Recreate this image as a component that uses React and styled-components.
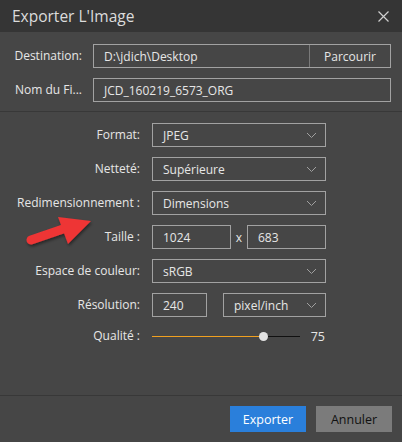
import React from "react";
import styled, { createGlobalStyle } from "styled-components";

const Global = createGlobalStyle`
  html, body {
    margin: 0;
    padding: 0;
    background: #464646;
  }
  * { box-sizing: border-box; }
`;

const Dialog = styled.div`
  position: relative;
  width: 402px;
  height: 442px;
  display: flex;
  flex-direction: column;
  background: #464646;
  color: #e6e6e6;
  font-family: "Open Sans", "Noto Sans", sans-serif;
  font-size: 12px;
`;

const TitleBar = styled.div`
  height: 32px;
  flex: none;
  display: flex;
  align-items: center;
  justify-content: space-between;
  padding: 0 13px 0 12px;
  background: #353535;
  font-size: 15.5px;
  color: #dcdcdc;
`;

const Close = styled.svg`
  width: 11px;
  height: 11px;
`;

const TopSection = styled.div`
  display: grid;
  grid-template-columns: 82px 298px;
  column-gap: 11px;
  row-gap: 10px;
  padding: 12px 0 9px 0;
  border-bottom: 1px solid #383838;
`;

const Main = styled.div`
  display: grid;
  grid-template-columns: 140px 174px;
  column-gap: 12px;
  row-gap: 10px;
  padding: 11px 0 0 0;
  align-items: center;
`;

const Label = styled.div`
  text-align: right;
  white-space: nowrap;
  line-height: ${(p) => (p.$short ? "18px" : "24px")};
`;

const Box = styled.div`
  height: 24px;
  border: 1px solid #a2a2a2;
  display: flex;
  align-items: center;
  padding-left: 10px;
  width: ${(p) => (p.$w ? `${p.$w}px` : "100%")};
  justify-content: space-between;
  white-space: nowrap;
`;

const Browse = styled.div`
  height: 100%;
  width: 81px;
  border-left: 1px solid #7a7a7a;
  display: flex;
  align-items: center;
  justify-content: center;
`;

const Chevron = styled.svg`
  width: 11px;
  height: 7px;
  margin-right: 8px;
`;

const Pair = styled.div`
  display: flex;
  align-items: center;
  justify-content: space-between;
`;

const Times = styled.span`
  width: 16px;
  text-align: center;
`;

const SliderRow = styled.div`
  display: flex;
  align-items: center;
  height: 18px;
`;

const Track = styled.div`
  position: relative;
  width: 148px;
  height: 1px;
  margin-top: 1px;
  background: #111;
`;

const Fill = styled.div`
  height: 1px;
  background: #f0a020;
`;

const Thumb = styled.div`
  position: absolute;
  top: -4px;
  width: 9px;
  height: 9px;
  margin-left: -4px;
  border-radius: 50%;
  background: #e2e2e2;
`;

const Value = styled.span`
  margin-left: auto;
  margin-right: 1px;
  font-size: 12.5px;
`;

const Spacer = styled.div`
  flex: 1;
  border-bottom: 1px solid #383838;
`;

const Footer = styled.div`
  flex: none;
  display: flex;
  justify-content: flex-end;
  gap: 10px;
  padding: 10px 10px 10px 0;
`;

const Button = styled.div`
  width: 76px;
  height: 26px;
  display: flex;
  align-items: center;
  justify-content: center;
  font-size: 12.5px;
  background: ${(p) => (p.$primary ? "#2a7fdb" : "#7b7b7b")};
  color: ${(p) => (p.$primary ? "#ffffff" : "#111111")};
`;

const Arrow = styled.svg`
  position: absolute;
  left: 20px;
  top: 210px;
  width: 80px;
  height: 45px;
  overflow: visible;
`;

const Down = () => (
  <Chevron viewBox="0 0 11 7">
    <path d="M1 1 L5.5 5.5 L10 1" fill="none" stroke="#a0a0a0" strokeWidth="1" />
  </Chevron>
);

const Select = ({ children, w }) => (
  <Box $w={w}>
    <span>{children}</span>
    <Down />
  </Box>
);

export default function App() {
  const quality = 75;
  const pct = 0.75;
  return (
    <Dialog>
      <Global />
      <TitleBar>
        <span>Exporter L'Image</span>
        <Close viewBox="0 0 11 11">
          <path d="M0.5 0.5 L10.5 10.5 M10.5 0.5 L0.5 10.5" stroke="#d0d0d0" strokeWidth="1.2" />
        </Close>
      </TitleBar>

      <TopSection>
        <Label>Destination:</Label>
        <Box style={{ paddingRight: 0 }}>
          <span>D:\jdich\Desktop</span>
          <Browse>Parcourir</Browse>
        </Box>
        <Label>Nom du Fi...</Label>
        <Box>
          <span>JCD_160219_6573_ORG</span>
        </Box>
      </TopSection>

      <Main>
        <Label>Format:</Label>
        <Select>JPEG</Select>
        <Label>Netteté:</Label>
        <Select>Supérieure</Select>
        <Label>Redimensionnement :</Label>
        <Select>Dimensions</Select>
        <Label>Taille :</Label>
        <Pair>
          <Box $w={79}>1024</Box>
          <Times>x</Times>
          <Box $w={79}>683</Box>
        </Pair>
        <Label>Espace de couleur:</Label>
        <Select>sRGB</Select>
        <Label>Résolution:</Label>
        <Pair>
          <Box $w={55}>240</Box>
          <Select w={103}>pixel/inch</Select>
        </Pair>
        <Label $short>Qualité :</Label>
        <SliderRow>
          <Track>
            <Fill style={{ width: `${pct * 148}px` }} />
            <Thumb style={{ left: `${pct * 148}px` }} />
          </Track>
          <Value>{quality}</Value>
        </SliderRow>
      </Main>

      <Spacer />

      <Footer>
        <Button $primary>Exporter</Button>
        <Button>Annuler</Button>
      </Footer>

      <Arrow viewBox="0 0 80 45">
        <defs>
          <filter id="sh" x="-20%" y="-20%" width="140%" height="160%">
            <feDropShadow dx="1" dy="2" stdDeviation="1.5" floodColor="#000" floodOpacity="0.45" />
          </filter>
        </defs>
        <g filter="url(#sh)" fill="#ee3535">
          <line x1="11" y1="30" x2="46" y2="18" stroke="#ee3535" strokeWidth="9" strokeLinecap="round" />
          <polygon points="38,7 71,11 48,34" />
        </g>
      </Arrow>
    </Dialog>
  );
}
